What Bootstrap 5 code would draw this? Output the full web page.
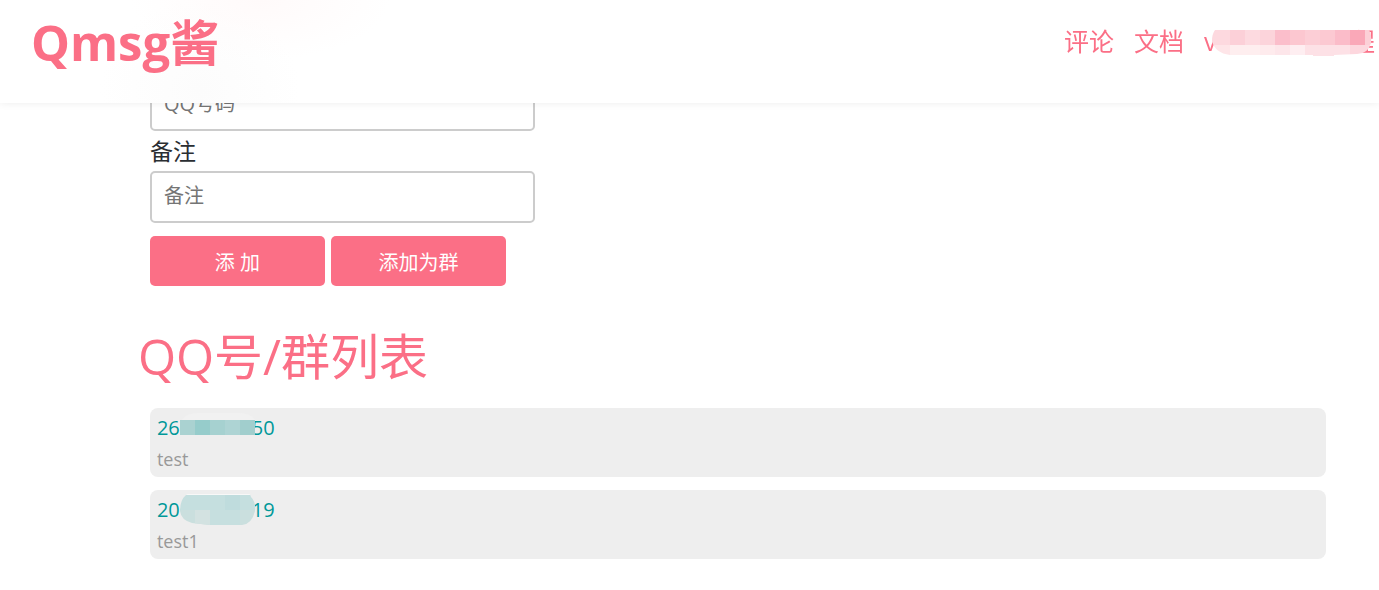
<!DOCTYPE html>
<html lang="zh-CN">
<head>
<meta charset="utf-8">
<meta name="viewport" content="width=device-width, initial-scale=1">
<title>Qmsg酱</title>
<link href="https://cdn.jsdelivr.net/npm/bootstrap@5.3.0/dist/css/bootstrap.min.css" rel="stylesheet">
<style>
  :root { --qm-pink: #fb6f86; --qm-teal: #009899; }
  body { font-family: "Open Sans", "Noto Sans CJK SC", sans-serif; background: #fff; color: #2a2e32; }
  .qm-header {
    min-height: 103px; padding: 10px 4px 0 31px;
    background:
      radial-gradient(ellipse 130px 60px at 260px 0, #fffafa, transparent),
      radial-gradient(ellipse 100px 90px at 200px 90px, #fcfcfc, transparent),
      #fff;
    box-shadow: 0 0 8px rgba(0, 0, 0, .08);
  }
  .qm-brand { font-size: 49px; line-height: 64px; }
  .qm-links { font-size: 25px; line-height: 32px; gap: 20px; padding-top: 15px; }
  .qm-header a { color: var(--qm-pink); }
  .qm-user { width: 171px; }
  .qm-user svg { left: 8px; top: 4px; }
  .qm-main { padding: 79px 3% 31px 10%; }
  .qm-inset { padding: 0 12px; }
  .qm-form { max-width: 409px; }
  .qm-form label { font-size: 23px; line-height: 40px; }
  .qm-form .form-control {
    height: 52px; padding: 0 12px 3px; font-size: 20px;
    border: 2px solid #ccc; border-radius: 5px;
  }
  .qm-form .form-control::placeholder { color: #757575; }
  .qm-btn, .qm-btn:hover {
    width: 175px; height: 50px; padding: 3px 0 0; font-size: 20px;
    color: #fff; background: var(--qm-pink); border: 0; border-radius: 5px;
  }
  .qm-actions { gap: 6px; margin-top: 13px; }
  .qm-title { font-size: 49px; line-height: 64px; color: var(--qm-pink); margin: 38px 0 20px; }
  .qm-list { gap: 13px; }
  .qm-item { background: #eee; border-radius: 8px; padding: 4px 7px 3px; }
  .qm-number { font-size: 20px; line-height: 32px; color: var(--qm-teal); }
  .qm-gap { width: 72px; }
  .qm-note { font-size: 18px; line-height: 30px; color: #999; }
</style>
</head>
<body>
<header class="qm-header fixed-top d-flex justify-content-between align-items-start">
  <a class="qm-brand fw-bold text-decoration-none" href="#">Qmsg酱</a>
  <nav class="qm-links d-flex">
    <a class="text-decoration-none" href="#">评论</a>
    <a class="text-decoration-none" href="#">文档</a>
    <a class="qm-user position-relative d-flex justify-content-between text-decoration-none" href="#">
      <span>v</span><span>程</span>
      <svg class="position-absolute" width="160" height="28" viewBox="0 0 160 28" aria-hidden="true">
        <clipPath id="userMask"><path d="M3 1H157Q160 6 159 14Q156 25 145 25L122 26V27H101V26H18Q3 24 0 12Q0 5 3 1Z"/></clipPath>
        <g clip-path="url(#userMask)">
          <path fill="#fdd9df" d="M0 0h18v16H0z"/><path fill="#fcd0d8" d="M18 0h15v16H18z"/>
          <path fill="#fddae0" d="M33 0h15v16H33z"/><path fill="#fcd4db" d="M48 0h15v16H48z"/>
          <path fill="#fbbecb" d="M63 0h15v16H63z"/><path fill="#fcc7d0" d="M78 0h15v16H78z"/>
          <path fill="#fcced6" d="M93 0h15v16H93z"/><path fill="#fcc9d2" d="M108 0h15v16h-15z"/>
          <path fill="#fbbcc9" d="M123 0h15v16h-15z"/><path fill="#faa8b8" d="M138 0h15v16h-15z"/>
          <path fill="#fcd0d7" d="M153 0h7v16h-7z"/>
          <path fill="#fee5e8" d="M0 16h18v12H0z"/><path fill="#feeeef" d="M18 16h30v12H18z"/>
          <path fill="#feebed" d="M48 16h15v12H48z"/><path fill="#fde6ea" d="M63 16h15v12H63z"/>
          <path fill="#feeef1" d="M78 16h15v12H78z"/><path fill="#fde1e6" d="M93 16h45v12H93z"/>
          <path fill="#fdd7de" d="M138 16h22v12h-22z"/>
        </g>
      </svg>
    </a>
  </nav>
</header>

<main class="qm-main">
  <form class="qm-form qm-inset" onsubmit="return false">
    <input class="form-control" type="text" placeholder="QQ号码" aria-label="QQ号码">
    <label class="d-block" for="remark">备注</label>
    <input class="form-control" id="remark" type="text" placeholder="备注">
    <div class="qm-actions d-flex">
      <button class="btn qm-btn" type="submit">添 加</button>
      <button class="btn qm-btn" type="button">添加为群</button>
    </div>
  </form>

  <h2 class="qm-title fw-normal">QQ号/群列表</h2>

  <div class="qm-inset">
    <ul class="qm-list list-unstyled d-flex flex-column mb-0">
      <li class="qm-item">
        <div class="qm-number d-flex">
          <span>26</span>
          <span class="qm-gap position-relative">
            <svg class="position-absolute top-0 start-0" width="76" height="32" viewBox="0 0 76 32" aria-hidden="true">
              <path fill="#f1f1f1" d="M2 8Q6 1 18 1H60Q72 2 75 8Z"/>
              <path fill="#aad2d1" d="M0 8h15v15H0z"/><path fill="#96cccb" d="M15 8h15v15H15z"/>
              <path fill="#a6d1d0" d="M30 8h15v15H30z"/><path fill="#aed4d4" d="M45 8h15v15H45z"/>
              <path fill="#a1cecd" d="M60 8h15v15H60z"/>
            </svg>
          </span>
          <span>50</span>
        </div>
        <div class="qm-note">test</div>
      </li>
      <li class="qm-item">
        <div class="qm-number d-flex">
          <span>20</span>
          <span class="qm-gap position-relative">
            <svg class="position-absolute top-0 start-0" width="76" height="32" viewBox="0 0 76 32" aria-hidden="true">
              <clipPath id="numMask"><path d="M6 1Q10 -2 18 -2H62Q70 -2 71 3Q76 8 75 17Q72 30 62 31H30L12 29Q1 26 0 17Q0 6 6 1Z"/></clipPath>
              <g clip-path="url(#numMask)">
                <path fill="#f8f8f8" d="M0 0h76v1H0z"/>
                <path fill="#c5dfdf" d="M0 1h76v15H0z"/><path fill="#bfdcdd" d="M45 1h15v15H45z"/>
                <path fill="#cadfde" d="M0 16h76v16H0z"/><path fill="#d3e2e1" d="M15 16h15v16H15z"/>
                <path fill="#c6dfdf" d="M30 16h30v16H30z"/>
              </g>
            </svg>
          </span>
          <span>19</span>
        </div>
        <div class="qm-note">test1</div>
      </li>
    </ul>
  </div>
</main>
<script src="https://cdn.jsdelivr.net/npm/bootstrap@5.3.0/dist/js/bootstrap.bundle.min.js"></script>
</body>
</html>
